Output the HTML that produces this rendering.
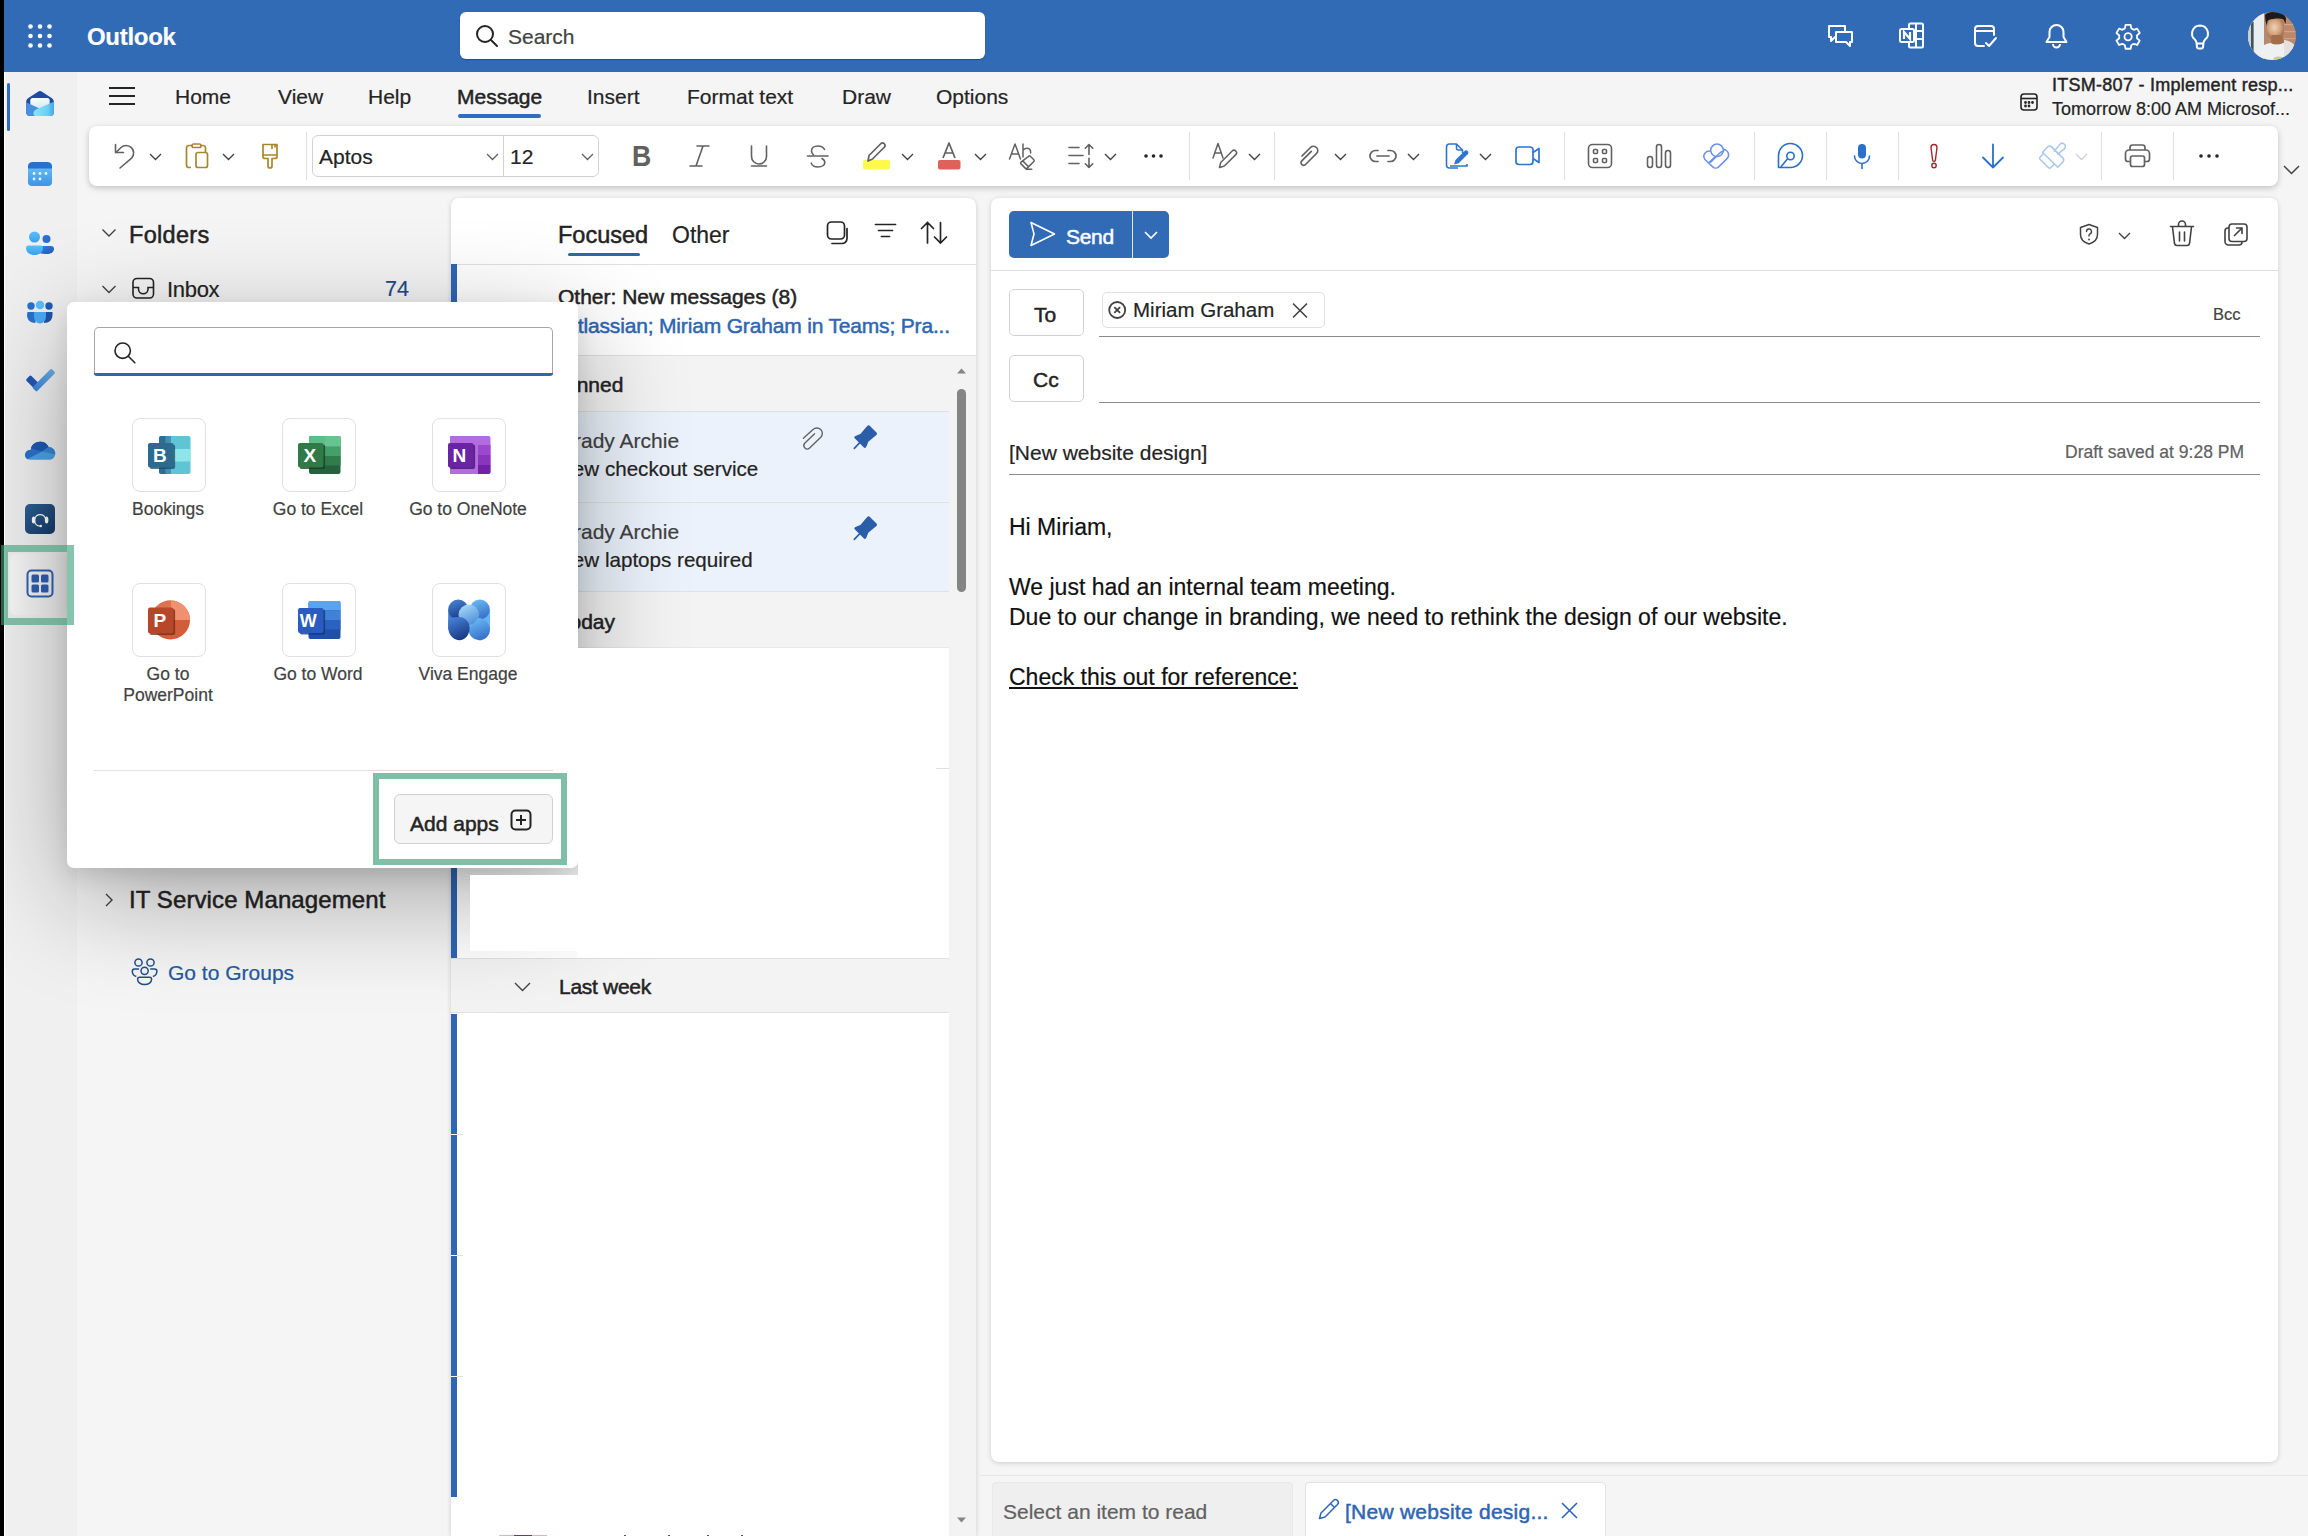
<!DOCTYPE html>
<html><head><meta charset="utf-8">
<style>
*{box-sizing:border-box;margin:0;padding:0}
html,body{width:2308px;height:1536px;overflow:hidden;background:#f5f5f5;font-family:"Liberation Sans",sans-serif;color:#242424}
.a{position:absolute}
.t{position:absolute;white-space:nowrap;line-height:1;-webkit-text-stroke:0.2px currentColor}
svg{position:absolute;overflow:visible}
#hdr{left:0;top:0;width:2308px;height:72px;background:#316ab5}
#edge{left:0;top:0;width:4px;height:1536px;background:#000;z-index:50}
#edge2{left:4px;top:72px;width:1px;height:1464px;background:#fff;z-index:50}
#rail{left:5px;top:72px;width:72px;height:1464px;background:#f0f0f0}
#ribbon{left:77px;top:72px;width:2231px;height:126px;background:#f5f5f5}
#tb{left:89px;top:126px;width:2189px;height:60px;background:#fff;border-radius:8px;box-shadow:0 2px 6px rgba(0,0,0,.22)}
#fold{left:77px;top:198px;width:374px;height:1338px;background:#f5f5f5}
#ml{left:451px;top:198px;width:525px;height:1338px;background:#fff;border-radius:8px 8px 0 0;box-shadow:0 1px 5px rgba(0,0,0,.17)}
#rp{left:991px;top:198px;width:1287px;height:1264px;background:#fff;border-radius:8px;box-shadow:0 1px 5px rgba(0,0,0,.17)}
#pop{left:67px;top:302px;width:511px;height:566px;background:#fff;border-radius:7px;box-shadow:0 30px 110px rgba(0,0,0,.32),0 8px 22px rgba(0,0,0,.10);z-index:30}
.sep{position:absolute;width:1px;background:#e0e0e0}
.sb{-webkit-text-stroke:0.5px currentColor}
</style></head><body>
<div id="edge" class="a"></div><div id="edge2" class="a"></div>
<div id="hdr" class="a">
  <svg style="left:28px;top:24px" width="24" height="24" viewBox="0 0 24 24" fill="#fff">
    <circle cx="2.5" cy="2.5" r="2.3"/><circle cx="12" cy="2.5" r="2.3"/><circle cx="21.5" cy="2.5" r="2.3"/>
    <circle cx="2.5" cy="12" r="2.3"/><circle cx="12" cy="12" r="2.3"/><circle cx="21.5" cy="12" r="2.3"/>
    <circle cx="2.5" cy="21.5" r="2.3"/><circle cx="12" cy="21.5" r="2.3"/><circle cx="21.5" cy="21.5" r="2.3"/>
  </svg>
  <div class="t" style="left:87px;top:25px;font-size:24px;font-weight:700;color:#fff;letter-spacing:-0.3px">Outlook</div>
  <div class="a" style="left:460px;top:12px;width:525px;height:47px;background:#fff;border-radius:6px;box-shadow:0 1px 1px rgba(0,0,0,.25)"></div>
  <svg style="left:475px;top:24px" width="24" height="24" viewBox="0 0 24 24" fill="none" stroke="#242424" stroke-width="2">
    <circle cx="10" cy="10" r="8"/><path d="M16 16l6 6" stroke-linecap="round"/>
  </svg>
  <div class="t" style="left:508px;top:26px;font-size:21px;color:#424242">Search</div>
  <!-- right icons -->
  <svg style="left:1827px;top:24px" width="27" height="24" viewBox="0 0 27 24" fill="none" stroke="#fff" stroke-width="2" stroke-linejoin="round">
    <path d="M2 2h16v11H8l-4 4v-4H2z"/><path d="M9 8h16v10h-2v4l-4-4H9z" fill="#316ab5"/>
  </svg>
  <svg style="left:1899px;top:22px" width="26" height="27" viewBox="0 0 26 27" fill="none" stroke="#fff" stroke-width="2">
    <rect x="10" y="1.5" width="14" height="24" rx="1.5"/><path d="M17 1.5v24M17 9h7M17 17h7"/>
    <rect x="1" y="7" width="14" height="13" rx="1.5" fill="#316ab5"/><path d="M5 17V10l6 7v-7" stroke-width="2.2"/>
  </svg>
  <svg style="left:1973px;top:24px" width="25" height="25" viewBox="0 0 25 25" fill="none" stroke="#fff" stroke-width="2" stroke-linejoin="round" stroke-linecap="round">
    <path d="M11 22H5a3 3 0 0 1-3-3V5a3 3 0 0 1 3-3h13a3 3 0 0 1 3 3v6"/><path d="M2 7h19"/><path d="M13 19l3 3 7-8"/>
  </svg>
  <svg style="left:2045px;top:23px" width="23" height="26" viewBox="0 0 23 26" fill="none" stroke="#fff" stroke-width="2" stroke-linejoin="round">
    <path d="M11.5 2a7 7 0 0 1 7 7v5l3 5H1.5l3-5V9a7 7 0 0 1 7-7z"/><path d="M8 21a3.5 3.5 0 0 0 7 0"/>
  </svg>
  <svg style="left:0;top:0" width="2308" height="72" viewBox="0 0 2308 72" fill="none" stroke="#fff" stroke-width="1.8" stroke-linejoin="round"><path d="M2125.56 24.87 L2130.64 24.87 L2131.33 28.40 L2133.76 29.81 L2137.17 28.64 L2139.70 33.03 L2136.99 35.39 L2136.99 38.21 L2139.70 40.57 L2137.17 44.96 L2133.76 43.79 L2131.33 45.20 L2130.64 48.73 L2125.56 48.73 L2124.87 45.20 L2122.44 43.79 L2119.03 44.96 L2116.50 40.57 L2119.21 38.21 L2119.21 35.39 L2116.50 33.03 L2119.03 28.64 L2122.44 29.81 L2124.87 28.40Z"/><circle cx="2128.1" cy="36.8" r="3.6"/></svg>
  <svg style="left:2190px;top:24px" width="20" height="26" viewBox="0 0 20 26" fill="none" stroke="#fff" stroke-width="2" stroke-linejoin="round">
    <path d="M10 1.5a8 8 0 0 1 5 14.2c-.8.7-1.2 1.4-1.5 2.8L13 23.5a1.5 1.5 0 0 1-1.5 1H8.5a1.5 1.5 0 0 1-1.5-1L6.5 18.5c-.3-1.4-.7-2.1-1.5-2.8A8 8 0 0 1 10 1.5z"/><path d="M6.8 19.5h6.4"/>
  </svg>
  <svg style="left:2248px;top:12px" width="48" height="48" viewBox="0 0 48 48">
   <defs><clipPath id="avc"><circle cx="24" cy="24" r="24"/></clipPath>
   <linearGradient id="brick" x1="0" y1="0" x2="1" y2="0"><stop offset="0" stop-color="#b08a74"/><stop offset="1" stop-color="#c08866"/></linearGradient>
   <radialGradient id="face" cx=".45" cy=".4" r=".6"><stop offset="0" stop-color="#f0d2b8"/><stop offset=".6" stop-color="#d3a27e"/><stop offset="1" stop-color="#a06c48"/></radialGradient></defs>
   <g clip-path="url(#avc)">
    <rect width="48" height="48" fill="url(#brick)"/>
    <rect x="36" y="12" width="12" height="1.2" fill="#c9b8a8" opacity=".7"/><rect x="36" y="19" width="12" height="1.2" fill="#c9b8a8" opacity=".7"/><rect x="36" y="26" width="12" height="1.2" fill="#c9b8a8" opacity=".6"/>
    <rect x="0" y="0" width="16" height="48" fill="#e9eef1"/>
    <rect x="0" y="0" width="3" height="48" fill="#c8d0d2"/>
    <rect x="3" y="10" width="2.6" height="32" fill="#40545a"/>
    <path d="M17 3c2-2.5 7-3.5 12-3 5 .5 8 2.5 9 6l-.5 6-2-4.5c-3-1.5-9-1.5-15 .5l-1.5 6-1.5-5z" fill="#1e1a18"/>
    <path d="M19.5 9c3-2 11-2.5 15.5 0l1 9c0 5-3 9.5-9 9.5s-8.5-4.5-8.5-9.5z" fill="url(#face)"/>
    <path d="M23.5 23h11l1.5 9h-13z" fill="#a46e4a"/>
    <path d="M6 48c1-10 8-16 17-17 3 2 8 2 12 0 6 0 11 4 13 9v8z" fill="#eef0f2"/>
    <path d="M36 28c5 .5 10 3 12 8v12H36z" fill="#e4e0e0"/>
    <ellipse cx="30.5" cy="47" rx="5" ry="2.5" fill="#c8cc90"/>
   </g>
  </svg>
</div>
<div id="rail" class="a"></div>
<div class="a" style="left:7px;top:83px;width:3px;height:48px;background:#2f6bbf;border-radius:2px;z-index:4"></div>
<svg style="left:0;top:0;z-index:4" width="80" height="640" viewBox="0 0 80 640">
 <defs>
  <linearGradient id="mg1" x1="0" y1="0" x2="1" y2="1"><stop offset="0" stop-color="#3b8fe0"/><stop offset="1" stop-color="#2a6bc8"/></linearGradient>
  <linearGradient id="mg2" x1="0" y1="0" x2="1" y2="0"><stop offset="0" stop-color="#7fdcfa"/><stop offset="1" stop-color="#3aa4ec"/></linearGradient>
  <linearGradient id="cg" x1="0" y1="0" x2="0" y2="1"><stop offset="0" stop-color="#6cc8fb"/><stop offset="1" stop-color="#3f93e6"/></linearGradient>
  <linearGradient id="pg1" x1="0" y1="0" x2="0" y2="1"><stop offset="0" stop-color="#5cc0f8"/><stop offset="1" stop-color="#3aa0ee"/></linearGradient>
  <linearGradient id="pg2" x1="0" y1="0" x2="1" y2="1"><stop offset="0" stop-color="#3a7fd6"/><stop offset="1" stop-color="#1f5bb8"/></linearGradient>
  <linearGradient id="hd" x1="0" y1="0" x2="1" y2="1"><stop offset="0" stop-color="#2d6296"/><stop offset="1" stop-color="#163a66"/></linearGradient>
  <linearGradient id="od1" x1="0" y1="0" x2="1" y2="1"><stop offset="0" stop-color="#2f74cf"/><stop offset="1" stop-color="#1f5cb4"/></linearGradient>
 </defs>
 <!-- mail -->
 <linearGradient id="mlet" x1="0" y1="0" x2=".3" y2="1"><stop offset="0" stop-color="#fff"/><stop offset="1" stop-color="#d6e4f4"/></linearGradient>
 <linearGradient id="msw" x1="0" y1="0" x2="1" y2="0"><stop offset="0" stop-color="#84e8fd"/><stop offset=".7" stop-color="#6ccdf3"/><stop offset="1" stop-color="#4aa6e6"/></linearGradient>
 <path d="M26.2 101.8c0-1.6.8-3 2.2-3.9l9.6-6.2c1.2-.8 2.8-.8 4 0l9.6 6.2c1.4.9 2.3 2.3 2.3 3.9V112a4 4 0 0 1-4 4H30.2a4 4 0 0 1-4-4z" fill="#1d4ca2"/>
 <rect x="30.3" y="98" width="19.4" height="12.5" rx="2.6" fill="url(#mlet)"/>
 <path d="M26.2 102.3l13.8 6.4 13.9-6.4V112a4 4 0 0 1-4 4H30.2a4 4 0 0 1-4-4z" fill="#4791dc"/>
 <path d="M33.5 113.2c0-1.8 1.2-3.2 3-4l17.4-7.4V112a4 4 0 0 1-4 4H36.3a2.8 2.8 0 0 1-2.8-2.8z" fill="url(#msw)"/>
 <!-- calendar -->
 <rect x="28" y="162" width="24" height="24" rx="4" fill="url(#cg)"/>
 <path d="M28 168a5 5 0 0 1 5-6h14a5 5 0 0 1 5 6v0.5H28z" fill="#2b6fcc"/>
 <g fill="#e8f4ff"><circle cx="34" cy="173.5" r="1.4"/><circle cx="40" cy="173.5" r="1.4"/><circle cx="46" cy="173.5" r="1.4"/><circle cx="34" cy="179" r="1.4"/><circle cx="40" cy="179" r="1.4"/></g>
 <!-- people -->
 <circle cx="46.5" cy="239" r="4" fill="#2a70d0"/>
 <path d="M40 246h11a3 3 0 0 1 3 3c0 3-3 5-8 5s-6-1-6-1z" fill="url(#pg2)"/>
 <circle cx="34.5" cy="237" r="5.5" fill="url(#pg1)"/>
 <path d="M26 248a2.5 2.5 0 0 1 2.5-2.5h12a2.5 2.5 0 0 1 2.5 2.5c0 4.5-4 7-8.5 7s-8.5-2.5-8.5-7z" fill="url(#pg1)"/>
 <!-- groups -->
 <circle cx="31" cy="306" r="3.7" fill="#2a70d0"/><circle cx="49" cy="306" r="3.7" fill="#1f5cb8"/>
 <path d="M27.5 312h8v11c-5 0-8.5-3-8.5-8z" fill="#2a70d0"/><path d="M44.5 312h8v3c0 5-3.5 8-8.5 8z" fill="#1f55a8"/>
 <circle cx="40" cy="305" r="4.3" fill="#5cbef8"/>
 <path d="M34 312h12v4.5c0 4-2.7 7-6 7s-6-3-6-7z" fill="#4aa8f0"/>
 <!-- todo -->
 <linearGradient id="tdg" x1="0" y1="1" x2="1" y2="0"><stop offset="0" stop-color="#3a7fd8"/><stop offset="1" stop-color="#6cb2e8"/></linearGradient>
 <path d="M26.6 378.9l2.8-2.8a1.5 1.5 0 0 1 2.1 0l7.5 7.5-4.9 4.9-7.5-7.5a1.5 1.5 0 0 1 0-2.1z" fill="#2456b6"/>
 <path d="M33.2 386.5l17-17a1.5 1.5 0 0 1 2.1 0l2.2 2.2a1.5 1.5 0 0 1 0 2.1l-17 17a1.5 1.5 0 0 1-2.1 0l-2.2-2.2a1.5 1.5 0 0 1 0-2.1z" fill="url(#tdg)"/>
 <!-- onedrive -->
 <path d="M29.8 459.8a4.8 4.8 0 0 1-4.8-4.9 5 5 0 0 1 5.6-4.9 9.6 9.6 0 0 1 18-3 6.6 6.6 0 0 1 6.6 6.9 6 6 0 0 1-5.4 5.9z" fill="#4da3e3"/>
 <path d="M25 454.9a5 5 0 0 1 5.6-4.9 9.6 9.6 0 0 1 18-3l-6.6 4.6-14.8 7.6a4.9 4.9 0 0 1-2.2-4.3z" fill="#2c72cf"/>
 <path d="M30.9 448.3a9.6 9.6 0 0 1 17.7-1.3L42 451.6z" fill="#1e58b2"/>
 <path d="M48.6 447a6.6 6.6 0 0 1 6.6 7.4L42 451.6z" fill="#3886d9"/>
 <!-- help desk -->
 <rect x="25" y="504" width="30" height="30" rx="5" fill="url(#hd)"/>
 <g fill="none" stroke="#fff" stroke-width="1.1"><path d="M34.5 519.5a5.9 6.8 0 0 1 11.3 0"/><path d="M34.7 520.5c0 3 2 5.4 5.8 5.6"/></g>
 <ellipse cx="33.6" cy="520" rx="1.8" ry="3.6" fill="#fff"/><ellipse cx="46.6" cy="520" rx="1.8" ry="3.6" fill="#fff"/><circle cx="40.8" cy="526" r="1.2" fill="#fff"/>
</svg>
<div class="a" style="left:10px;top:554px;width:58px;height:61px;background:linear-gradient(90deg,#f8f8f8,#ededed);border-radius:6px;z-index:4"></div>
<svg style="left:0;top:0;z-index:4" width="80" height="640" viewBox="0 0 80 640">
 <rect x="27.5" y="570.5" width="25" height="26" rx="4" fill="none" stroke="#2b63b8" stroke-width="2"/>
 <g fill="#2f5fb0"><rect x="31.5" y="574.5" width="7.5" height="8" rx="1.5"/><rect x="41" y="574.5" width="7.5" height="8" rx="1.5"/><rect x="31.5" y="584.5" width="7.5" height="8" rx="1.5"/><rect x="41" y="584.5" width="7.5" height="8" rx="1.5"/></g>
</svg>
<div class="a" style="left:1px;top:545px;width:73px;height:80px;border:7px solid rgba(60,160,125,.62);z-index:60"></div>
<div id="ribbon" class="a"></div>
<div class="a" style="left:0;top:0;z-index:5">
  <svg style="left:109px;top:86px" width="26" height="20" viewBox="0 0 26 20" stroke="#242424" stroke-width="2"><path d="M0 2h26M0 10h26M0 18h26"/></svg>
  <div class="t" style="left:175px;top:86px;font-size:21px">Home</div>
  <div class="t" style="left:278px;top:86px;font-size:21px">View</div>
  <div class="t" style="left:368px;top:86px;font-size:21px">Help</div>
  <div class="t" style="left:457px;top:86px;font-size:21px;font-weight:400;-webkit-text-stroke:0.5px #242424">Message</div>
  <div class="a" style="left:458px;top:114px;width:83px;height:4px;background:#2f6bbf;border-radius:2px"></div>
  <div class="t" style="left:587px;top:86px;font-size:21px">Insert</div>
  <div class="t" style="left:687px;top:86px;font-size:21px">Format text</div>
  <div class="t" style="left:842px;top:86px;font-size:21px">Draw</div>
  <div class="t" style="left:936px;top:86px;font-size:21px">Options</div>
  <svg style="left:2020px;top:93px" width="18" height="18" viewBox="0 0 18 18" fill="none" stroke="#242424" stroke-width="1.6"><rect x="1" y="1" width="16" height="16" rx="3"/><path d="M1 5.5h16"/><circle cx="5.5" cy="9.5" r=".6" fill="#242424"/><circle cx="9" cy="9.5" r=".6" fill="#242424"/><circle cx="12.5" cy="9.5" r=".6" fill="#242424"/><circle cx="5.5" cy="13" r=".6" fill="#242424"/><circle cx="9" cy="13" r=".6" fill="#242424"/></svg>
  <div class="t sb" style="left:2052px;top:76px;font-size:18px;letter-spacing:0.27px;-webkit-text-stroke:0.45px #242424">ITSM-807 - Implement resp...</div>
  <div class="t" style="left:2052px;top:100px;font-size:18px">Tomorrow 8:00 AM Microsof...</div>
  <svg style="left:2283px;top:165px" width="17" height="10" viewBox="0 0 17 10" fill="none" stroke="#424242" stroke-width="1.5"><path d="M1 1l7.5 7.5L16 1"/></svg>
</div>
<div id="tb" class="a"></div>
<svg style="left:0;top:0;z-index:6" width="2308" height="200" viewBox="0 0 2308 200"><path d="M306.5 132V180" stroke="#e0e0e0" stroke-width="1"/><path d="M1189.5 132V180" stroke="#e0e0e0" stroke-width="1"/><path d="M1274.5 132V180" stroke="#e0e0e0" stroke-width="1"/><path d="M1564.5 132V180" stroke="#e0e0e0" stroke-width="1"/><path d="M1754.5 132V180" stroke="#e0e0e0" stroke-width="1"/><path d="M1826.5 132V180" stroke="#e0e0e0" stroke-width="1"/><path d="M1898.5 132V180" stroke="#e0e0e0" stroke-width="1"/><path d="M2101.5 132V180" stroke="#e0e0e0" stroke-width="1"/><path d="M2173.5 132V180" stroke="#e0e0e0" stroke-width="1"/><g fill="none" stroke="#616161" stroke-width="1.6" stroke-linecap="round" stroke-linejoin="round"><path d="M115.5 144.5v8h8"/><path d="M116 152.5l5-5a7.5 7.5 0 0 1 10.6 10.6L120 168"/></g><path d="M150 154l5.5 5.5 5.5-5.5" stroke="#424242" stroke-width="1.4" fill="none"/><g fill="none" stroke="#a8862c" stroke-width="1.7" stroke-linejoin="round"><path d="M191 167.5h-2a2.5 2.5 0 0 1-2.5-2.5v-17a2.5 2.5 0 0 1 2.5-2.5h3"/><path d="M201 145.5h2a2.5 2.5 0 0 1 2.5 2.5v4"/><rect x="192" y="144" width="9" height="3.5" rx="1.7"/><rect x="196" y="152.5" width="11.5" height="15" rx="2"/></g><path d="M223 154l5.5 5.5 5.5-5.5" stroke="#424242" stroke-width="1.4" fill="none"/><g fill="none" stroke="#a8862c" stroke-width="1.7" stroke-linejoin="round"><path d="M263 144.5h14v12a2 2 0 0 1-2 2h-3v7.5a2 2 0 0 1-4 0v-7.5h-3a2 2 0 0 1-2-2z"/><path d="M263 155h14M272 145v4M275 145v2.5"/></g><text x="632" y="166.5" font-family="Liberation Sans" font-weight="700" font-size="29" fill="#616161" transform="translate(632 0) scale(0.92 1) translate(-632 0)">B</text><g fill="none" stroke="#616161" stroke-width="1.6" stroke-linecap="round"><path d="M697 146h12M690 166h12M703 146l-7 20"/></g><g fill="none" stroke="#616161" stroke-width="1.6" stroke-linecap="round"><path d="M751.5 146v10.5a7.5 7.5 0 0 0 15 0V146M751.5 166h15"/></g><g fill="none" stroke="#616161" stroke-width="1.6" stroke-linecap="round"><path d="M807.5 156h20.5"/><path d="M824.5 149.5c-1-2-3.5-3.5-6.5-3.5-4 0-6.5 2.2-6.5 5 0 1.5.8 2.8 2 3.8M822 158.5c1.8 1 2.8 2.5 2.8 4 0 2.5-2.7 4.5-6.8 4.5-3.3 0-5.8-1.5-6.8-3.8"/></g><rect x="863" y="160" width="27" height="9.5" rx="2" fill="#fdfa4d"/><g fill="none" stroke="#616161" stroke-width="1.7" stroke-linejoin="round"><path d="M868 161l1-5.5 12-12a2.5 2.5 0 0 1 3.5 3.5l-12 12z" fill="#fff"/></g><path d="M902 154l5.5 5.5 5.5-5.5" stroke="#424242" stroke-width="1.4" fill="none"/><rect x="938" y="160" width="22.5" height="9.5" rx="2" fill="#dc625a"/><g fill="none" stroke="#616161" stroke-width="1.7" stroke-linejoin="round"><path d="M943 158l6-15 6 15M945 153h8"/></g><path d="M975 154l5.5 5.5 5.5-5.5" stroke="#424242" stroke-width="1.4" fill="none"/><g fill="none" stroke="#616161" stroke-width="1.5" stroke-linejoin="round" stroke-linecap="round"><path d="M1009.5 159l5.5-15 5.5 15M1011.5 154h7"/><path d="M1023 144v13M1023 150.5c.8-1.5 2.2-2.3 3.8-2.3 2.2 0 3.8 1.5 3.8 3.8v1"/><path d="M1028.6 156.3a1.3 1.3 0 0 1 1.8 0l3.4 3.4a1.3 1.3 0 0 1 0 1.8l-7.6 7.6-5.2-5.2a1.3 1.3 0 0 1 0-1.8zM1023.4 161.6l4.9 4.9M1026.2 169.2h5.6"/></g><g fill="none" stroke="#616161" stroke-width="1.6" stroke-linecap="round" stroke-linejoin="round"><path d="M1069 147.5h10M1069 155.5h14M1069 163.5h10M1089 144.5v10M1089 158.3v9.2M1085.3 148.2l3.7-3.7 3.7 3.7M1085.3 163.8l3.7 3.7 3.7-3.7"/></g><path d="M1105 154l5.5 5.5 5.5-5.5" stroke="#424242" stroke-width="1.4" fill="none"/><circle cx="1146" cy="156" r="1.8" fill="#242424"/><circle cx="1153.5" cy="156" r="1.8" fill="#242424"/><circle cx="1161" cy="156" r="1.8" fill="#242424"/><g fill="none" stroke="#616161" stroke-width="1.5" stroke-linejoin="round" stroke-linecap="round"><path d="M1213 158l5-14.5 5 14.5M1214.8 153h6.4"/><path d="M1219.5 167.5l1.2-5 11.5-11.5a2.5 2.5 0 0 1 3.6 3.6L1224.3 166z"/></g><path d="M1249 154l5.5 5.5 5.5-5.5" stroke="#424242" stroke-width="1.4" fill="none"/><g fill="none" stroke="#616161" stroke-width="1.7" stroke-linecap="round"><path d="M1302 156l8.5-8.5a4.2 4.2 0 0 1 6 6l-11 11a2.6 2.6 0 0 1-3.7-3.7l9.5-9.5"/></g><path d="M1335 154l5.5 5.5 5.5-5.5" stroke="#424242" stroke-width="1.4" fill="none"/><g fill="none" stroke="#616161" stroke-width="1.7" stroke-linecap="round"><path d="M1378 150.5h-2.5a5.5 5.5 0 0 0 0 11h2.5M1388 150.5h2.5a5.5 5.5 0 0 1 0 11h-2.5M1377 156h12"/></g><path d="M1408 154l5.5 5.5 5.5-5.5" stroke="#424242" stroke-width="1.4" fill="none"/><g fill="none" stroke="#2f74d0" stroke-width="1.6" stroke-linejoin="round"><path d="M1458 168h-8.5a3 3 0 0 1-3-3v-18a3 3 0 0 1 3-3h7l6 6v3"/><path d="M1456.5 144v4a2 2 0 0 0 2 2h4.5"/></g><path d="M1454 164.5l1.5-4.5 9-9a2.2 2.2 0 0 1 3.2 3.2l-9 9z" fill="#2f74d0"/><path d="M1450 166h17v-2" stroke="#2f74d0" stroke-width="1.6" fill="none"/><path d="M1480 154l5.5 5.5 5.5-5.5" stroke="#424242" stroke-width="1.4" fill="none"/><g fill="none" stroke="#2f74d0" stroke-width="1.7" stroke-linejoin="round"><rect x="1516" y="147" width="17" height="17.5" rx="3"/><path d="M1533 152.5l6-4v14l-6-4"/></g><g fill="none" stroke="#616161" stroke-width="1.6"><rect x="1588.5" y="144.5" width="23" height="23" rx="4"/><rect x="1593.5" y="149.5" width="4" height="4" rx="1"/><rect x="1602.5" y="149.5" width="4" height="4" rx="1"/><rect x="1593.5" y="158.5" width="4" height="4" rx="1"/><rect x="1602.5" y="158.5" width="4" height="4" rx="1"/></g><g fill="none" stroke="#616161" stroke-width="1.6"><rect x="1647.5" y="156.5" width="5" height="11" rx="2.5"/><rect x="1656.5" y="144.5" width="5" height="23" rx="2.5"/><rect x="1665.5" y="150.5" width="5" height="17" rx="2.5"/></g><g fill="none" stroke="#6b8ff0" stroke-width="1.5" stroke-linejoin="round"><circle cx="1717" cy="150.3" r="6.3"/><path d="M1710.8 151.4a5.2 5.2 0 0 0-5.8 8.1l7.7 7.4a4.3 4.3 0 0 0 6 0l8.3-8.3a5.4 5.4 0 0 0-3.8-9.2"/><path d="M1715 156.8l-4.6 4.6a3 3 0 0 1-1.5.8"/><path d="M1710.2 162.6l9.6-9.6a5.2 5.2 0 0 1 4.4-1.8"/></g><g fill="none" stroke="#2a6fcc" stroke-width="1.6" stroke-linejoin="round"><path d="M1778.5 167.5V156a12 12 0 1 1 12 11.5z"/><circle cx="1790.5" cy="156" r="3.7"/><path d="M1787.8 158.6l-7 8.4"/></g><rect x="1858" y="144" width="8" height="14.5" rx="4" fill="#2a6fcc"/><g fill="none" stroke="#2a6fcc" stroke-width="1.6" stroke-linecap="round"><path d="M1854.5 156a7.5 7.5 0 0 0 15 0M1862 163.5v5"/></g><g fill="none" stroke="#a4262c" stroke-width="1.4"><path d="M1931 147.5a3 3 0 0 1 6 0l-1.6 12.5a1.4 1.4 0 0 1-2.8 0z"/><circle cx="1934" cy="165.5" r="2.2"/></g><g fill="none" stroke="#2a6fcc" stroke-width="1.8" stroke-linecap="round" stroke-linejoin="round"><path d="M1993 144.5v23M1983 157.5l10 10 10-10"/></g><g fill="none" stroke="#a9c6ef" stroke-width="1.5" stroke-linejoin="round"><path d="M2053.8 151.8l6-7.4a3 3 0 0 1 4.2-.4l.6.6a3 3 0 0 1-.3 4.3l-7.2 5.7"/><path d="M2042.5 152.3l5-5.2a3 3 0 0 1 4.2 0l11 10.8a3 3 0 0 1 0 4.2l-5 5.2z"/><path d="M2043.5 153.5l-3.5 3.7a1.5 1.5 0 0 0 0 2.1l8.5 8.5a1.5 1.5 0 0 0 2.1 0l3.6-3.6"/></g><path d="M2076 154l5.5 5.5 5.5-5.5" stroke="#d0d0d0" stroke-width="1.4" fill="none"/><g fill="none" stroke="#616161" stroke-width="1.7" stroke-linejoin="round"><path d="M2130 150v-2.5a2.5 2.5 0 0 1 2.5-2.5h10a2.5 2.5 0 0 1 2.5 2.5V150"/><path d="M2130 161.5h-2a2.5 2.5 0 0 1-2.5-2.5v-5.5a3.5 3.5 0 0 1 3.5-3.5h17a3.5 3.5 0 0 1 3.5 3.5V159a2.5 2.5 0 0 1-2.5 2.5h-2"/><rect x="2130.5" y="156" width="14" height="10.5" rx="2"/></g><circle cx="2201" cy="156" r="1.8" fill="#242424"/><circle cx="2209" cy="156" r="1.8" fill="#242424"/><circle cx="2217" cy="156" r="1.8" fill="#242424"/></svg>
<div class="a" style="left:312px;top:135px;width:287px;height:42px;border:1px solid #d1d1d1;border-radius:6px;z-index:6"></div>
<div class="a" style="left:503px;top:136px;width:1px;height:40px;background:#d1d1d1;z-index:6"></div>
<div class="t" style="left:319px;top:146px;font-size:21px;z-index:6">Aptos</div>
<div class="t" style="left:510px;top:146px;font-size:21px;z-index:6">12</div>
<svg style="left:0;top:0;z-index:6" width="2308" height="200"><path d="M487 154l5.5 5.5 5.5-5.5M582 154l5.5 5.5 5.5-5.5" stroke="#616161" stroke-width="1.3" fill="none"/></svg>
<div id="fold" class="a"></div>
<div class="a" style="left:0;top:0;z-index:3">
 <svg style="left:0;top:0" width="460" height="1000" viewBox="0 0 460 1000" fill="none" stroke="#424242" stroke-width="1.4">
  <path d="M102.5 229.5l6.5 6.5 6.5-6.5"/>
  <path d="M102.5 286l6.5 6.5 6.5-6.5"/>
  <rect x="133" y="278.5" width="20.5" height="19.5" rx="4" stroke="#242424" stroke-width="1.6"/>
  <path d="M133 287.5h5.5v1.5a4.75 4.75 0 0 0 9.5 0v-1.5h5.5" stroke="#242424" stroke-width="1.6"/>
  <path d="M106 894l6 6-6 6"/>
  <g stroke="#1f4f8a" stroke-width="1.5"><circle cx="138.5" cy="962.5" r="3.6"/><circle cx="150.5" cy="962.5" r="3.6"/><circle cx="144.6" cy="970.8" r="3.6"/><path d="M139 968.9h-4.4a2.3 2.3 0 0 0-2.3 2.3c0 2.6 1.8 4.6 4 5.3M150.2 968.9h4.4a2.3 2.3 0 0 1 2.3 2.3c0 2.6-1.8 4.6-4 5.3M139.6 977.3h10a2 2 0 0 1 2 2c0 3-3.1 5.3-7 5.3s-7-2.3-7-5.3a2 2 0 0 1 2-2z"/></g>
 </svg>
 <div class="t sb" style="left:129px;top:223.5px;font-size:23.5px;letter-spacing:0.3px">Folders</div>
 <div class="t" style="left:167px;top:279px;font-size:22px;letter-spacing:-0.3px">Inbox</div>
 <div class="t" style="left:385px;top:279px;font-size:21.5px;color:#1f4b8a">74</div>
 <div class="t sb" style="left:129px;top:888px;font-size:24px;letter-spacing:0.1px">IT Service Management</div>
 <div class="t" style="left:168px;top:962px;font-size:21px;color:#245a9e;letter-spacing:0px">Go to Groups</div>
</div>
<div id="ml" class="a" style="overflow:hidden">
 <div class="a" style="left:0;top:66px;width:525px;height:1px;background:#e0e0e0"></div>
 <div class="a" style="left:0;top:157px;width:525px;height:1px;background:#e0e0e0"></div>
 <div class="a" style="left:0;top:158px;width:525px;height:1180px;background:#f3f3f3"></div>
 <div class="a" style="left:0;top:213px;width:498px;height:90px;background:#ebf2fb;border-top:1px solid #e1e1e1"></div>
 <div class="a" style="left:0;top:304px;width:498px;height:90px;background:#ebf2fb;border-top:1px solid #e1e1e1;border-bottom:1px solid #e1e1e1"></div>
 <div class="a" style="left:0;top:449px;width:498px;height:311px;background:#fff;border-top:1px solid #e8e8e8"></div>
 <div class="a" style="left:0;top:760px;width:498px;height:55px;background:#f3f3f3;border-top:1px solid #e1e1e1;border-bottom:1px solid #e1e1e1"></div>
 <div class="a" style="left:0;top:815px;width:498px;height:600px;background:#fff"></div>
 <div class="a" style="left:0;top:66px;width:6px;height:694px;background:#2f66b3"></div>
 <div class="a" style="left:0;top:816px;width:6px;height:483px;background:#2f66b3"></div>
 <div class="a" style="left:6px;top:936px;width:6px;height:1px;background:#e0e0e0"></div>
 <div class="a" style="left:0;top:936px;width:6px;height:1px;background:#fff"></div>
 <div class="a" style="left:6px;top:1057px;width:6px;height:1px;background:#e0e0e0"></div>
 <div class="a" style="left:0;top:1057px;width:6px;height:1px;background:#fff"></div>
 <div class="a" style="left:6px;top:1178px;width:6px;height:1px;background:#e0e0e0"></div>
 <div class="a" style="left:0;top:1178px;width:6px;height:1px;background:#fff"></div>
 <div class="a" style="left:484px;top:570px;width:14px;height:1px;background:#e0e0e0"></div>
 <!-- scrollbar -->
 <svg style="left:0;top:0" width="523" height="1338"><path d="M506 175.5l4.5-5 4.5 5z" fill="#858585"/><path d="M506 1319.5l4.5 5 4.5-5z" fill="#858585"/><rect x="506" y="191" width="9" height="203" rx="4.5" fill="#858585"/></svg>
</div>
<div class="a" style="left:451px;top:198px;width:525px;height:1338px;z-index:2">
 <div class="t sb" style="left:107px;top:25.5px;font-size:23.5px;letter-spacing:0px">Focused</div>
 <div class="t" style="left:221px;top:26px;font-size:23px;color:#242424">Other</div>
 <div class="a" style="left:117px;top:55px;width:72px;height:3px;background:#2f66b3;border-radius:2px"></div>
 <svg style="left:0;top:0" width="525" height="1338" fill="none" stroke="#242424" stroke-width="1.7" stroke-linecap="round">
  <rect x="376.5" y="24" width="17" height="17" rx="4"/><path d="M381 45.5h10a5 5 0 0 0 5-5v-10"/>
  <path d="M424.5 26.5h20M427.5 32.5h14M430.5 38.5h8"/>
  <path d="M476.5 45V24.5M470.5 30.5l6-6 6 6M489.5 24.5V45M483.5 39l6 6 6-6"/>
 </svg>
 <div class="t sb" style="left:107px;top:88px;font-size:21px">Other: New messages (8)</div>
 <div class="t sb" style="left:113px;top:117px;font-size:21px;color:#2f66b3;letter-spacing:-0.17px">Atlassian; Miriam Graham in Teams; Pra...</div>
 <div class="t sb" style="left:107px;top:176px;font-size:21px">Pinned</div>
 <div class="t" style="left:109px;top:232px;font-size:21px;color:#424242">Brady Archie</div>
 <div class="t" style="left:107px;top:261px;font-size:20.6px">New checkout service</div>
 <div class="t" style="left:109px;top:323px;font-size:21px;color:#424242">Brady Archie</div>
 <div class="t" style="left:107px;top:352px;font-size:20.6px">New laptops required</div>
 <div class="t sb" style="left:108px;top:413px;font-size:21px">Today</div>
 <div class="t sb" style="left:108px;top:778px;font-size:21px;letter-spacing:-0.3px">Last week</div>
 <svg style="left:0;top:0" width="525" height="1338">
  <path d="M64 785l7.5 7.5 7.5-7.5" fill="none" stroke="#424242" stroke-width="1.4"/>
  <path d="M352.4 240.3L362.0 231.6a5.4 5.4 0 0 1 7.8 7.6L358.6 250.0a3.4 3.4 0 0 1-4.9-4.7L363.6 235.8" fill="none" stroke="#616161" stroke-width="1.35" stroke-linecap="round"/>
  <g fill="#2b5ea8"><path d="M416.2 227.9c.8-.8 2-.8 2.8 0l6.5 6.5c.8.8.6 2.2-.4 2.8L417.3 243.8c-.6 1.5-1.5 4-2.3 5.4-.5.8-1.5.9-2.1.3l-9.2-9.2c-.6-.6-.5-1.6.3-2.1 1.4-.8 3.9-1.7 5.4-2.3z"/><path d="M408.8 244.6l-5.5 5.8" stroke="#2b5ea8" stroke-width="1.6" stroke-linecap="round"/></g>
  <g fill="#2b5ea8" transform="translate(0 91)"><path d="M416.2 227.9c.8-.8 2-.8 2.8 0l6.5 6.5c.8.8.6 2.2-.4 2.8L417.3 243.8c-.6 1.5-1.5 4-2.3 5.4-.5.8-1.5.9-2.1.3l-9.2-9.2c-.6-.6-.5-1.6.3-2.1 1.4-.8 3.9-1.7 5.4-2.3z"/><path d="M408.8 244.6l-5.5 5.8" stroke="#2b5ea8" stroke-width="1.6" stroke-linecap="round"/></g>
 </svg>
</div>
<div id="rp" class="a"></div>
<div class="a" style="left:0;top:0;z-index:2">
 <div class="a" style="left:1009px;top:211px;width:160px;height:47px;background:#316ab5;border-radius:5px"></div>
 <div class="a" style="left:1132px;top:211px;width:1px;height:47px;background:#fff;opacity:.85"></div>
 <svg style="left:0;top:0" width="2308" height="1536" viewBox="0 0 2308 1536" fill="none">
  <path d="M1031 222.5l23.5 11.5-23.5 11.5 3-11.5z" stroke="#fff" stroke-width="1.6" stroke-linejoin="round"/>
  <path d="M1145 232l6 6 6-6" stroke="#fff" stroke-width="1.6"/>
  <!-- shield -->
  <path d="M2089 224.5l8.5 3v7c0 4.5-3.5 8-8.5 9.5-5-1.5-8.5-5-8.5-9.5v-7z" stroke="#424242" stroke-width="1.5" stroke-linejoin="round"/>
  <path d="M2086.5 231.5a2.5 2.5 0 1 1 3.5 2.3c-.8.4-1 1-1 1.7v.5" stroke="#424242" stroke-width="1.4" stroke-linecap="round"/><circle cx="2089" cy="239.5" r=".9" fill="#424242"/>
  <path d="M2119 233l5.5 5.5 5.5-5.5" stroke="#424242" stroke-width="1.4"/>
  <!-- trash -->
  <path d="M2170.5 226.5h23M2178.5 226v-1.5a3.5 3.5 0 0 1 7 0v1.5M2172.5 227l2 16.5a2.5 2.5 0 0 0 2.5 2h10a2.5 2.5 0 0 0 2.5-2l2-16.5M2179.5 232v9M2184.5 232v9" stroke="#424242" stroke-width="1.6" stroke-linecap="round" stroke-linejoin="round"/>
  <!-- popout -->
  <path d="M2229 228h-1a3 3 0 0 0-3 3v10.5a3.5 3.5 0 0 0 3.5 3.5H2239a3 3 0 0 0 3-3v-1" stroke="#424242" stroke-width="1.6"/>
  <rect x="2229" y="224" width="18" height="17.5" rx="3" stroke="#424242" stroke-width="1.6"/>
  <path d="M2234.5 235.5l7.5-7.5M2236.5 228h5.5v5.5" stroke="#424242" stroke-width="1.6" stroke-linecap="round"/>
  <!-- chip icon -->
  <circle cx="1117.2" cy="310" r="8" stroke="#424242" stroke-width="1.8"/>
  <path d="M1114.3 307.1l5.8 5.8M1120.1 307.1l-5.8 5.8" stroke="#424242" stroke-width="1.8"/>
  <path d="M1293 303.5l14 14M1307 303.5l-14 14" stroke="#424242" stroke-width="1.6"/>
 </svg>
 <div class="t sb" style="left:1066px;top:226px;font-size:21px;color:#fff;letter-spacing:-0.3px">Send</div>
 <div class="a" style="left:990px;top:270px;width:1288px;height:1px;background:#e0e0e0"></div>
 <div class="a" style="left:1009px;top:289px;width:75px;height:47px;border:1px solid #d1d1d1;border-radius:5px"></div>
 <div class="t sb" style="left:1034px;top:304px;font-size:21px">To</div>
 <div class="a" style="left:1009px;top:355px;width:75px;height:47px;border:1px solid #d1d1d1;border-radius:5px"></div>
 <div class="t sb" style="left:1033px;top:369px;font-size:21px">Cc</div>
 <div class="a" style="left:1102px;top:292px;width:223px;height:36px;border:1px solid #e0e0e0;border-radius:5px"></div>
 <div class="t" style="left:1133px;top:300px;font-size:20.5px;color:#242424">Miriam Graham</div>
 <div class="t" style="left:2213px;top:306px;font-size:16.5px;color:#424242">Bcc</div>
 <div class="a" style="left:1099px;top:336px;width:1161px;height:1px;background:#8a8a8a"></div>
 <div class="a" style="left:1099px;top:402px;width:1161px;height:1px;background:#8a8a8a"></div>
 <div class="t" style="left:1009px;top:442px;font-size:21px;color:#242424">[New website design]</div>
 <div class="t" style="left:2065px;top:444px;font-size:17.5px;color:#616161">Draft saved at 9:28 PM</div>
 <div class="a" style="left:1009px;top:474px;width:1251px;height:1px;background:#8a8a8a"></div>
 <div class="t" style="left:1009px;top:516px;font-size:23px;color:#111">Hi Miriam,</div>
 <div class="t" style="left:1009px;top:576px;font-size:23px;color:#111">We just had an internal team meeting.</div>
 <div class="t" style="left:1009px;top:606px;font-size:23px;color:#111">Due to our change in branding, we need to rethink the design of our website.</div>
 <div class="t" style="left:1009px;top:666px;font-size:23px;color:#111;text-decoration:underline;text-decoration-thickness:1.5px;text-underline-offset:2px">Check this out for reference:</div>
 <!-- bottom tabs -->
 <div class="a" style="left:979px;top:1475px;width:1329px;height:1px;background:#e6e6e6"></div>
 <div class="a" style="left:992px;top:1482px;width:301px;height:60px;background:#efefef;border:1px solid #e8e8e8;border-radius:4px"></div>
 <div class="t" style="left:1003px;top:1501px;font-size:21px;color:#616161">Select an item to read</div>
 <div class="a" style="left:1305px;top:1482px;width:301px;height:60px;background:#fff;border:1px solid #e3e3e3;border-radius:4px"></div>
 <div class="t sb" style="left:1345px;top:1501px;font-size:21px;color:#2f66b3;letter-spacing:0.25px">[New website desig...</div>
 <svg style="left:0;top:0" width="2308" height="1536" viewBox="0 0 2308 1536" fill="none">
  <path d="M1319.5 1518.5l1.5-5.5 12.5-12.5a2.8 2.8 0 0 1 4 4l-12.5 12.5z M1330.5 1503.5l4 4" stroke="#2f66b3" stroke-width="1.5" stroke-linejoin="round"/>
  <path d="M1562 1503l15 15M1577 1503l-15 15" stroke="#2f66b3" stroke-width="1.6"/>
 </svg>
</div>
<div class="a" style="left:578px;top:648px;width:371px;height:309px;background:#fff;z-index:31"></div>
<div class="a" style="left:936px;top:768px;width:13px;height:1px;background:#e0e0e0;z-index:31"></div>
<div class="a" style="left:470px;top:875px;width:108px;height:76px;background:#fff;z-index:31"></div>
<div class="a" style="left:499px;top:1534.5px;width:48px;height:2px;background:#d8b4d8;z-index:3"></div>
<div class="a" style="left:514px;top:1534.5px;width:18px;height:2px;background:#6a4060;z-index:3"></div>
<div class="a" style="left:624px;top:1535px;width:2px;height:1px;background:#555;z-index:3"></div><div class="a" style="left:668px;top:1535px;width:2px;height:1px;background:#555;z-index:3"></div><div class="a" style="left:707px;top:1535px;width:2px;height:1px;background:#555;z-index:3"></div><div class="a" style="left:741px;top:1535px;width:2px;height:1px;background:#555;z-index:3"></div>
<div id="pop" class="a">
 <div class="a" style="left:27px;top:25px;width:459px;height:48px;border:1px solid #a6a6a6;border-bottom:none;border-radius:5px 5px 0 0"></div>
 <div class="a" style="left:27px;top:71px;width:459px;height:2.5px;background:#2f66b3;border-radius:0 0 4px 4px"></div>
 <svg style="left:47px;top:40px" width="22" height="22" viewBox="0 0 22 22" fill="none" stroke="#242424" stroke-width="1.6"><circle cx="8.7" cy="8.7" r="7.7"/><path d="M14.3 14.3l6.5 6.5" stroke-linecap="round"/></svg>
 <!-- tiles row1 -->
 <div class="a" style="left:65px;top:116px;width:74px;height:74px;border:1px solid #e0e0e0;border-radius:8px"></div>
 <div class="a" style="left:215px;top:116px;width:74px;height:74px;border:1px solid #e0e0e0;border-radius:8px"></div>
 <div class="a" style="left:365px;top:116px;width:74px;height:74px;border:1px solid #e0e0e0;border-radius:8px"></div>
 <div class="a" style="left:65px;top:281px;width:74px;height:74px;border:1px solid #e0e0e0;border-radius:8px"></div>
 <div class="a" style="left:215px;top:281px;width:74px;height:74px;border:1px solid #e0e0e0;border-radius:8px"></div>
 <div class="a" style="left:365px;top:281px;width:74px;height:74px;border:1px solid #e0e0e0;border-radius:8px"></div>
 <svg style="left:0;top:0" width="511" height="566" viewBox="67 302 511 566">
  <defs>
   <linearGradient id="vv1" x1="0" y1="0" x2="1" y2="1"><stop offset="0" stop-color="#3a7fd8"/><stop offset="1" stop-color="#163f8c"/></linearGradient>
   <linearGradient id="vv2" x1="0" y1="0" x2="1" y2="1"><stop offset="0" stop-color="#73c6f5"/><stop offset="1" stop-color="#2d7fd6"/></linearGradient>
   <linearGradient id="vv3" x1="0" y1="0" x2="0" y2="1"><stop offset="0" stop-color="#b3e0f7"/><stop offset="1" stop-color="#5aaee8"/></linearGradient>
  </defs>
  <!-- Bookings -->
  <rect x="159" y="436" width="31.5" height="38" rx="2" fill="#5fc4d5"/>
  <rect x="170" y="449" width="20.5" height="12.5" fill="#8fe6e8"/>
  <path d="M161 436h9.5v38H161a2 2 0 0 1-2-2v-34a2 2 0 0 1 2-2z" fill="#2f6e92"/>
  <rect x="165.5" y="436" width="5" height="38" fill="#4390b3"/>
  <rect x="149.6" y="444.6" width="25.5" height="24.5" rx="2" fill="#1d4a66" opacity=".75"/><rect x="148" y="443" width="25.5" height="24.5" rx="2" fill="#2c6a90"/>
  <text x="153" y="461.5" font-family="Liberation Sans" font-weight="700" font-size="19" fill="#fff">B</text>
  <!-- Excel -->
  <rect x="309" y="436" width="31.5" height="38" rx="2" fill="#25613c"/>
  <path d="M311 436h27.5a2 2 0 0 1 2 2v8.5H309V438a2 2 0 0 1 2-2z" fill="#5bbd87"/>
  <rect x="309" y="446.5" width="31.5" height="9.5" fill="#43a06b"/>
  <rect x="309" y="456" width="31.5" height="9.5" fill="#2f7d4c"/>
  <rect x="325" y="436" width="15.5" height="10.5" fill="#65c490"/>
  <rect x="299.6" y="444.6" width="25.5" height="24.5" rx="2" fill="#1a3a22" opacity=".75"/><rect x="298" y="443" width="25.5" height="24.5" rx="2" fill="#2f7a47"/>
  <text x="303.5" y="461.5" font-family="Liberation Sans" font-weight="700" font-size="19" fill="#fff">X</text>
  <!-- OneNote -->
  <path d="M450 436h38.5a2 2 0 0 1 2 2v34a2 2 0 0 1-2 2H450z" fill="#b26ce0"/>
  <rect x="478" y="445" width="12.5" height="10" fill="#9b48cc"/>
  <rect x="478" y="455" width="12.5" height="9.5" fill="#8a35bd"/>
  <path d="M478 464.5h12.5v7.5a2 2 0 0 1-2 2H478z" fill="#7120a8"/>
  <rect x="449.6" y="444.6" width="25.5" height="24.5" rx="2" fill="#3a1060" opacity=".75"/><rect x="448" y="443" width="25.5" height="24.5" rx="2" fill="#6b23a6"/>
  <text x="452.5" y="461.5" font-family="Liberation Sans" font-weight="700" font-size="19" fill="#fff">N</text>
  <!-- PowerPoint -->
  <circle cx="170.5" cy="620" r="19.5" fill="#d35c3b"/>
  <path d="M170.5 600.5a19.5 19.5 0 0 1 19.5 19.5h-19.5z" fill="#f0906f"/>
  <path d="M151 620a19.5 19.5 0 0 1 19.5-19.5V620z" fill="#e0714f"/>
  <rect x="149.6" y="609.1" width="25.5" height="26.0" rx="2" fill="#6a2a18" opacity=".75"/><rect x="148" y="607.5" width="25.5" height="26" rx="2" fill="#b7472a"/>
  <text x="153.5" y="626.5" font-family="Liberation Sans" font-weight="700" font-size="19" fill="#fff">P</text>
  <!-- Word -->
  <rect x="308.5" y="601" width="32" height="38" rx="2" fill="#1f4fa8"/>
  <path d="M310.5 601h28a2 2 0 0 1 2 2v7.5h-32V603a2 2 0 0 1 2-2z" fill="#5ba3ea"/>
  <rect x="308.5" y="610.5" width="32" height="9.5" fill="#3f82d8"/>
  <rect x="308.5" y="620" width="32" height="9.5" fill="#2b62c0"/>
  <rect x="299.6" y="609.6" width="25.5" height="25.0" rx="2" fill="#163270" opacity=".75"/><rect x="298" y="608" width="25.5" height="25" rx="2" fill="#2a5bc0"/>
  <text x="299.8" y="626.5" font-family="Liberation Sans" font-weight="700" font-size="18" fill="#fff">W</text>
  <!-- Viva Engage -->
  <defs>
   <linearGradient id="vd" x1="0" y1="0" x2=".4" y2="1"><stop offset="0" stop-color="#4a88de"/><stop offset="1" stop-color="#1b3c86"/></linearGradient>
   <linearGradient id="vl" x1="0" y1="0" x2=".4" y2="1"><stop offset="0" stop-color="#70c2f8"/><stop offset="1" stop-color="#3a74cc"/></linearGradient>
   <linearGradient id="vc" x1="0" y1="0" x2=".5" y2="1"><stop offset="0" stop-color="#aee0fa"/><stop offset="1" stop-color="#5592dc"/></linearGradient>
  </defs>
  <rect x="448.2" y="609.5" width="20.8" height="20" fill="#3f7bd2"/>
  <rect x="469" y="609.5" width="21" height="20" fill="#62b4f2"/>
  <circle cx="479.8" cy="609.5" r="10" fill="url(#vl)"/>
  <circle cx="458.2" cy="609.5" r="10" fill="url(#vd)"/>
  <circle cx="468.8" cy="614.8" r="10.3" fill="url(#vc)"/>
  <path d="M478 618a11.8 11.8 0 0 1 12 11.5 11 11 0 0 1-11 10.8 11 11 0 0 1-10.5-10.8z" fill="url(#vl)"/>
  <path d="M448.2 620c2-2 6-3 10.5-3a10.6 10.6 0 0 1 10.8 11.8c0 6-4.5 11.5-10 11.5s-11.3-5-11.3-13z" fill="url(#vd)"/>
 </svg>
 <div class="t" style="left:36px;top:199px;width:130px;text-align:center;font-size:17.5px;color:#424242">Bookings</div>
 <div class="t" style="left:186px;top:199px;width:130px;text-align:center;font-size:17.5px;color:#424242">Go to Excel</div>
 <div class="t" style="left:336px;top:199px;width:130px;text-align:center;font-size:17.5px;color:#424242">Go to OneNote</div>
 <div class="t" style="left:36px;top:364px;width:130px;text-align:center;font-size:17.5px;color:#424242">Go to</div>
 <div class="t" style="left:36px;top:385px;width:130px;text-align:center;font-size:17.5px;color:#424242">PowerPoint</div>
 <div class="t" style="left:186px;top:364px;width:130px;text-align:center;font-size:17.5px;color:#424242">Go to Word</div>
 <div class="t" style="left:336px;top:364px;width:130px;text-align:center;font-size:17.5px;color:#424242">Viva Engage</div>
 <div class="a" style="left:27px;top:468px;width:459px;height:1px;background:#e0e0e0"></div>
 <div class="a" style="left:327px;top:492px;width:159px;height:50px;background:#f5f5f5;border:1px solid #d1d1d1;border-radius:6px"></div>
 <div class="t sb" style="left:343px;top:511px;font-size:21px">Add apps</div>
 <svg style="left:443px;top:507px" width="22" height="22" viewBox="0 0 22 22" fill="none" stroke="#242424" stroke-width="2"><rect x="1.5" y="1.5" width="19" height="19" rx="4"/><path d="M11 6v10M6 11h10"/></svg>
 <div class="a" style="left:306px;top:471px;width:194px;height:92px;border:6px solid #7fbfa8"></div>
</div>
</body></html>
